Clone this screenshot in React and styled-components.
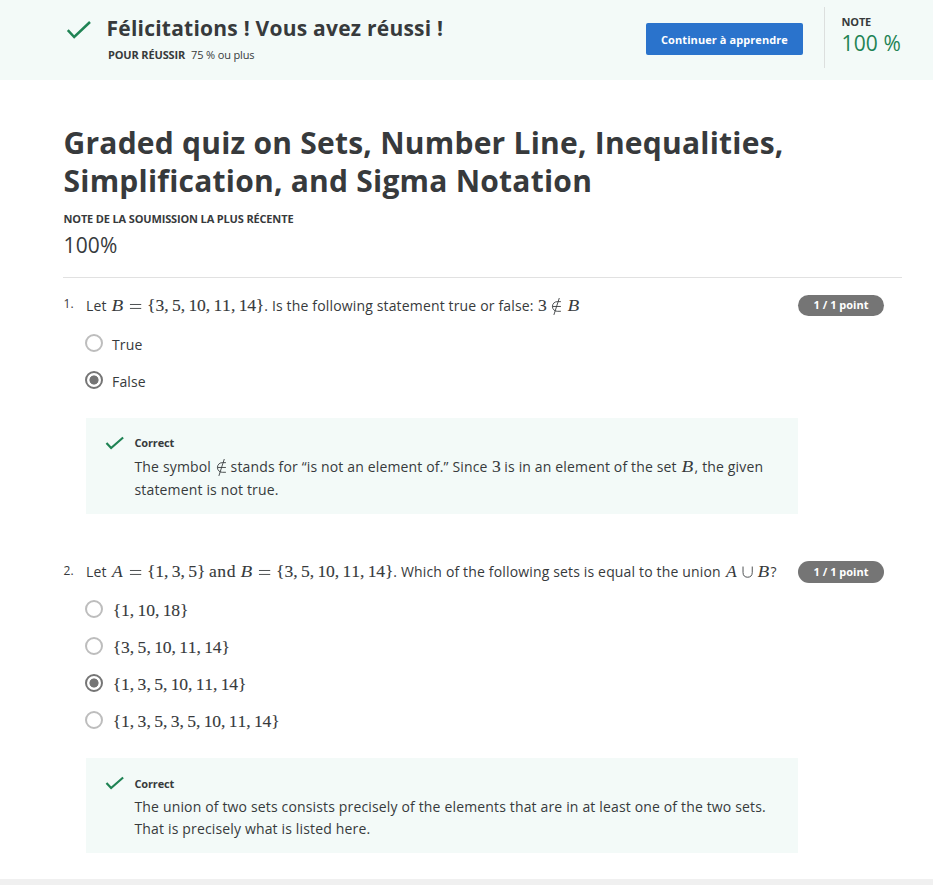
import React from "react";
import styled, { createGlobalStyle } from "styled-components";

const GlobalStyle = createGlobalStyle`
  * { box-sizing: border-box; }
  body {
    margin: 0;
    background: #fff;
    color: #373a3c;
    font: 14px/22px "Open Sans", "Noto Sans", sans-serif;
    letter-spacing: 0.155px;
    overflow: hidden;
  }
  h1, h2, p { margin: 0; padding: 0; }
`;

const Page = styled.div`
  height: 885px;
  display: flex;
  flex-direction: column;
`;

const Banner = styled.header`
  height: 80px;
  flex: none;
  display: flex;
  align-items: flex-start;
  background: #f3faf8;
  padding: 7px 32px 0 66px;
`;

const BannerText = styled.div`
  flex: 1;
  padding: 6px 0 0 15.5px;
`;

const BannerTitle = styled.h2`
  font-size: 21px;
  line-height: 30px;
  font-weight: 700;
  letter-spacing: 0.23px;
  white-space: nowrap;
`;

const BannerRule = styled.p`
  margin: 3px 0 0 1.5px;
  font-size: 11px;
  line-height: 18px;
  letter-spacing: -0.15px;

  strong { margin-right: 6px; }
`;

const CheckIcon = styled.svg`
  flex: none;
  display: block;
  width: ${(p) => p.$width}px;
  height: ${(p) => p.$height}px;
  margin-top: ${(p) => p.$top}px;
  fill: none;
  stroke: #1f8354;
`;

const ContinueButton = styled.button`
  width: 157px;
  height: 32px;
  margin: 16px 21px 0 0;
  padding: 2px 0 0;
  border: 0;
  border-radius: 2px;
  background: #2a73cc;
  color: #fff;
  font: 700 11px/30px "Open Sans", sans-serif;
  letter-spacing: 0.08px;
  white-space: nowrap;
`;

const Grade = styled.div`
  width: 77px;
  height: 61px;
  padding: 6px 0 0 16.5px;
  border-left: 1px solid #dcdfde;
  white-space: nowrap;
`;

const Label = styled.div`
  font-size: 11px;
  line-height: 18px;
  font-weight: 700;
  letter-spacing: -0.15px;
`;

const GradeValue = styled.div`
  font-size: 21px;
  line-height: 24px;
  color: #1f8354;
`;

const Main = styled.main`
  flex: 1;
  padding: 44px 31px 0 63px;
`;

const Title = styled.h1`
  font-size: 30px;
  line-height: 38px;
  font-weight: 700;
  letter-spacing: 0.23px;
`;

const Score = styled.div`
  margin-top: 4px;
  font-size: 21px;
  line-height: 26px;
`;

const Summary = styled.section`
  height: 154px;
  padding-left: 0.5px;
  border-bottom: 1px solid #e1e1e1;

  ${Label} { margin-top: 10px; }
`;

const QuestionItem = styled.section`
  display: grid;
  grid-template-columns: 23px 712px 86px;
  padding-top: ${(p) => p.$top}px;
`;

const Number = styled.div`
  padding: ${(p) => p.$top || 0}px 0 0 0.5px;
  font-size: 12px;
  line-height: 18px;
`;

const Prompt = styled.p`
  height: 22px;
  white-space: nowrap;
`;

const Points = styled.div`
  height: ${(p) => p.$height}px;
  border-radius: 11px;
  background: #757575;
  color: #fff;
  font-size: 11px;
  line-height: ${(p) => p.$line}px;
  font-weight: 700;
  letter-spacing: 0;
  text-align: center;
`;

const Body = styled.div`
  grid-column: 2;
`;

const Options = styled.div`
  padding-top: ${(p) => p.$top}px;
  margin-left: -1px;
`;

const Option = styled.label`
  height: 37px;
  display: flex;
  align-items: flex-start;
  gap: 9px;
`;

const Radio = styled.span`
  width: 18px;
  height: 18px;
  margin-top: 0.4px;
  border: 2px solid ${(p) => (p.$checked ? "#757575" : "#bdbdbd")};
  border-radius: 50%;
  background: ${(p) =>
    p.$checked ? "radial-gradient(circle, #757575 4.2px, transparent 4.9px)" : "#fff"};
`;

const Feedback = styled.div`
  display: flex;
  height: ${(p) => p.$height}px;
  margin-top: 10px;
  padding: 16px 20px 0 18.5px;
  background: #f3faf8;
`;

const FeedbackText = styled.div`
  padding: ${(p) => p.$top || 0}px 0 0 11px;
  line-height: ${(p) => p.$line}px;
  white-space: nowrap;

  ${Label} { margin-bottom: 3px; }
`;

const Formula = styled.span`
  margin-left: 0.7px;
  font-family: "Liberation Serif", serif;
  font-size: 16.94px;
  line-height: 0;
  letter-spacing: 0;
  white-space: nowrap;
`;

/* Widths are in units of the 16.94px math em; the glyphs are drawn a little larger. */
const Atom = styled.span`
  display: inline-flex;
  justify-content: center;
  width: ${(p) => p.$w * 16.94}px;
  margin-right: ${(p) => (p.$after || 0) * 16.94}px;
  font-size: ${(p) => (p.$italic ? 17.2 : 17.6)}px;
  font-style: ${(p) => (p.$italic ? "italic" : "normal")};
  line-height: 20px;
  height: 20px;
  transform: scaleX(${(p) => p.$stretch || 1});
  -webkit-text-stroke: ${(p) => (p.$italic ? 0 : 0.12)}px currentColor;
`;

const Symbol = styled.svg`
  width: ${(p) => p.$w}em;
  height: 1em;
  margin: 0 ${(p) => p.$space}em;
  vertical-align: -0.25em;
  overflow: visible;
  fill: none;
  stroke: currentColor;
  stroke-width: 52;
`;

const RELATIONS = {
  "=": { w: 0.778, space: 0.278, d: "M56 617H722M56 383H722" },
  "∉": { w: 0.667, space: 0, d: "M585 215H370C200 215 84 350 84 500S200 785 370 785H585M84 500H585M490 0L170 1000" },
  "∪": { w: 0.667, space: 0.222, d: "M60 150V500C60 700 180 780 333 780S606 700 606 500V150" },
};

const LETTERS = {
  A: { w: 0.75, stretch: 1.02 },
  B: { w: 0.759, stretch: 1.12 },
};

function Tex({ children, spaced }) {
  return (
    <Formula>
      {[...children].map((c, i) => {
        const rel = RELATIONS[c];
        const letter = LETTERS[c];
        if (rel) {
          return (
            <Symbol
              key={i}
              $w={rel.w}
              $space={spaced ? 0.278 : rel.space}
              viewBox={`0 0 ${rel.w * 1000} 1000`}
              role="img"
              aria-label={c}
            >
              <path d={rel.d} />
            </Symbol>
          );
        }
        if (letter) return <Atom key={i} $w={letter.w} $stretch={letter.stretch} $after={0.03} $italic>{c}</Atom>;
        if (c === ",") return <Atom key={i} $w={0.278} $after={0.197}>,</Atom>;
        return <Atom key={i} $w={0.503}>{c}</Atom>;
      })}
    </Formula>
  );
}

const AndText = styled(Formula)`
  margin: 0 0.2em;
  font-size: 17.6px;
  letter-spacing: 0.5px;
  -webkit-text-stroke: 0.12px currentColor;
`;

function Check({ large }) {
  return (
    <CheckIcon
      $width={large ? 25 : 19}
      $height={large ? 20 : 15}
      $top={large ? 13 : 2}
      viewBox="0 0 25 20"
    >
      <path d={large ? "M1.8 10.2L8.2 17L24 2" : "M1.8 9.2L8 16L24 2"} strokeWidth={large ? 2.5 : 2.9} />
    </CheckIcon>
  );
}

function Choices({ items, selected, top }) {
  return (
    <Options $top={top}>
      {items.map((item, i) => (
        <Option key={i}>
          <Radio $checked={i === selected} />
          <span>{item}</span>
        </Option>
      ))}
    </Options>
  );
}

const Footer = styled.footer`
  flex: none;
  height: 6px;
  background: #f0f0f0;
`;

export default function App() {
  return (
    <Page>
      <GlobalStyle />
      <Banner>
        <Check large />
        <BannerText>
          <BannerTitle>Félicitations ! Vous avez réussi !</BannerTitle>
          <BannerRule><strong>POUR RÉUSSIR</strong>75 % ou plus</BannerRule>
        </BannerText>
        <ContinueButton>Continuer à apprendre</ContinueButton>
        <Grade>
          <Label>NOTE</Label>
          <GradeValue>100 %</GradeValue>
        </Grade>
      </Banner>
      <Main>
        <Summary>
          <Title>Graded quiz on Sets, Number Line, Inequalities, Simplification, and Sigma Notation</Title>
          <Label>NOTE DE LA SOUMISSION LA PLUS RÉCENTE</Label>
          <Score>100%</Score>
        </Summary>

        <QuestionItem $top={17}>
          <Number>1.</Number>
          <Prompt>
            Let <Tex>{"B={3,5,10,11,14}"}</Tex>. Is the following statement true or false: <Tex spaced>3∉B</Tex>
          </Prompt>
          <Points $height={21} $line={20}>1 / 1 point</Points>
          <Body>
            <Choices top={17} selected={1} items={["True", "False"]} />
            <Feedback $height={96}>
              <Check />
              <FeedbackText $line={23}>
                <Label>Correct</Label>
                <p>
                  The symbol <Tex>∉</Tex> stands for “is not an element of.” Since <Tex>3</Tex> is in an element of the set <Tex>B</Tex>, the given
                  <br />
                  statement is not true.
                </p>
              </FeedbackText>
            </Feedback>
          </Body>
        </QuestionItem>

        <QuestionItem $top={47}>
          <Number $top={1}>2.</Number>
          <Prompt>
            Let <Tex>{"A={1,3,5}"}</Tex><AndText>and</AndText><Tex>{"B={3,5,10,11,14}"}</Tex>. Which of the following sets is equal to the union <Tex>A∪B</Tex>?
          </Prompt>
          <Points $height={22} $line={22}>1 / 1 point</Points>
          <Body>
            <Choices
              top={17}
              selected={2}
              items={["{1,10,18}", "{3,5,10,11,14}", "{1,3,5,10,11,14}", "{1,3,5,3,5,10,11,14}"].map((s) => (
                <Tex key={s}>{s}</Tex>
              ))}
            />
            <Feedback $height={95}>
              <Check />
              <FeedbackText $line={22} $top={1}>
                <Label>Correct</Label>
                <p>
                  The union of two sets consists precisely of the elements that are in at least one of the two sets.
                  <br />
                  That is precisely what is listed here.
                </p>
              </FeedbackText>
            </Feedback>
          </Body>
        </QuestionItem>
      </Main>
      <Footer />
    </Page>
  );
}
